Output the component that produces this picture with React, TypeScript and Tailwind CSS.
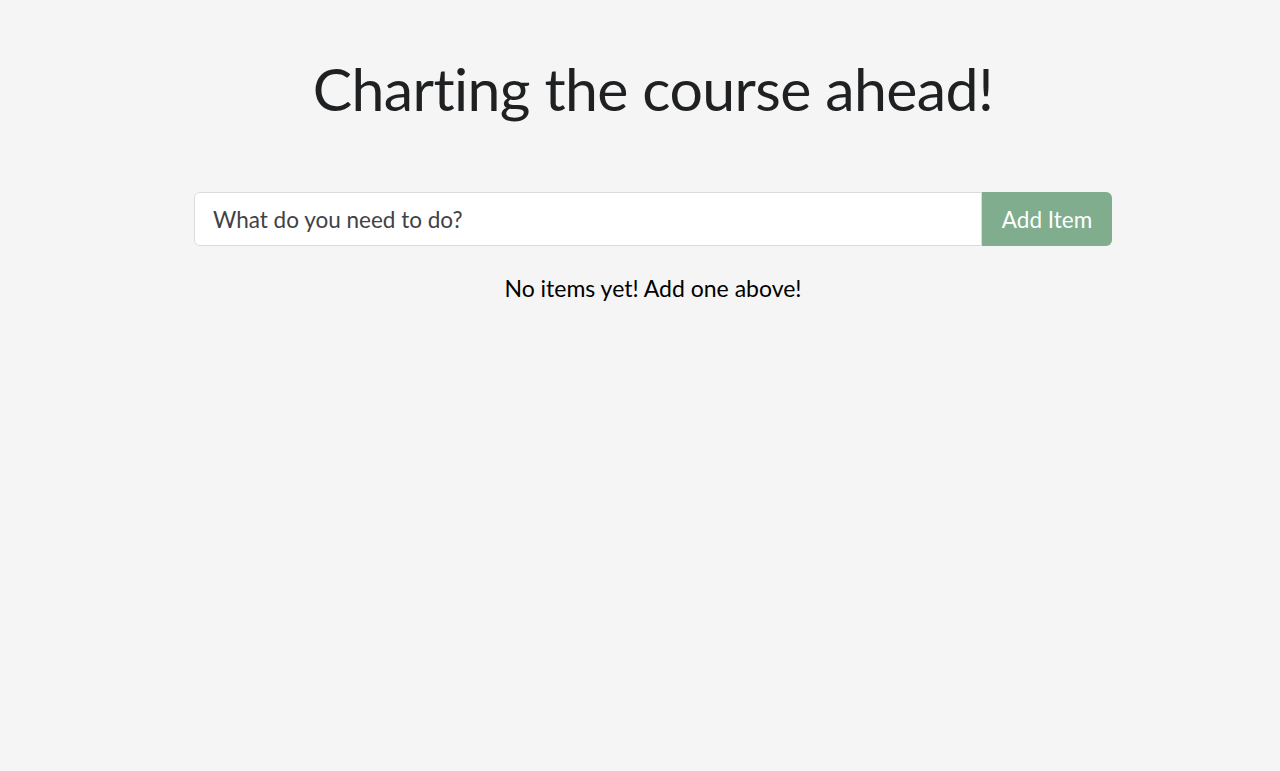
export default function App() {
  return (
    <div className="min-h-[771px] w-full bg-[#f5f5f5] text-[#212529] [font-variant-ligatures:none]" style={{ fontFamily: "Lato, 'Noto Sans', sans-serif" }}>
      <div className="ml-[194px] flex w-[918px] flex-col items-center pt-[54px]">
        <h1 className="text-[59px] leading-[1.2] tracking-[-0.6px] text-[#1f2022]">Charting the course ahead!</h1>
        <div className="mt-[67px] flex h-[54px] w-full">
          <input
            className="h-full flex-1 rounded-l-[6px] border border-[#dcdcdc] bg-white px-[18px] pt-[2px] text-[22.5px] text-[#3f4246] placeholder:text-[#3f4246] outline-none"
            placeholder="What do you need to do?"
          />
          <button className="h-full w-[130px] rounded-r-[6px] bg-[#7fad8e] pt-[2px] text-[22.5px] text-white">Add Item</button>
        </div>
        <p className="mt-[25px] text-[23px] leading-[1.5] text-black">No items yet! Add one above!</p>
      </div>
    </div>
  );
}
